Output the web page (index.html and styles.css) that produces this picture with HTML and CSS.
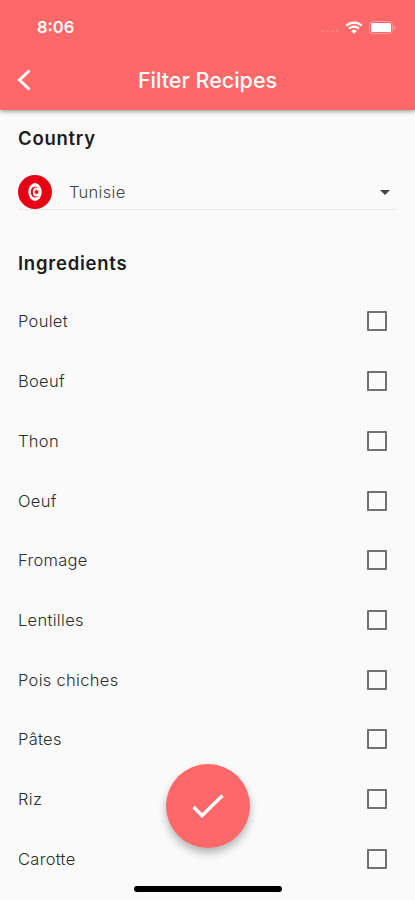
FILE: index.html
```html
<!DOCTYPE html>
<html lang="en">
  <head>
    <meta charset="UTF-8" />
    <meta name="viewport" content="width=device-width, initial-scale=1.0" />
    <title>Filter Recipes</title>
    <link rel="stylesheet" href="styles.css">
  </head>
  <body>
    <header class="header">
      <div class="status-bar">
        <span class="time">8:06</span>
        <div class="status-icons">
          <span class="signal"><i></i><i></i><i></i><i></i></span>
          <svg class="wifi" viewBox="0 0 18 13" width="18" height="13">
            <path d="M1.2 4.7a11.2 11.2 0 0 1 15.6 0M4 7.6a7.2 7.2 0 0 1 10 0" fill="none" stroke="#fff" stroke-width="2.2" />
            <path d="M9 12.8L6.2 10a4 4 0 0 1 5.6 0z" fill="#fff" />
          </svg>
          <svg class="battery" viewBox="0 0 27 13" width="27" height="13">
            <rect x="0.5" y="0.5" width="23" height="12" rx="3" fill="none" stroke="#ffa0a0" />
            <rect x="2" y="2" width="20" height="9" rx="1.5" fill="#fff" />
            <path d="M25 4.5c2 .5 2 3.5 0 4z" fill="#ffa0a0" />
          </svg>
        </div>
      </div>
      <div class="nav">
        <svg class="back" viewBox="0 0 14 22" width="14" height="22">
          <path d="M12.5 1.5L2.5 11l10 9.5" fill="none" stroke="#fff" stroke-width="3" />
        </svg>
        <h1>Filter Recipes</h1>
      </div>
    </header>

    <main class="content">
      <h2>Country</h2>
      <div class="country">
        <svg class="flag" viewBox="0 0 34 34" width="34" height="34">
          <circle cx="17" cy="17" r="17" fill="#e70013" />
          <ellipse cx="17" cy="17" rx="6.7" ry="9" fill="#fff" />
          <ellipse cx="17" cy="17" rx="4.2" ry="5.5" fill="#e70013" />
          <ellipse cx="18.3" cy="17" rx="3.5" ry="4.5" fill="#fff" />
          <path d="M15.5 17l2-.8.2-2.4 1.3 1.9 1.9-.7-1.1 2 1.1 2-1.900-.7-1.300 1.900-.2-2.400z" fill="#e70013" />
        </svg>
        <span class="country-name">Tunisie</span>
        <svg class="arrow" viewBox="0 0 10 5" width="10" height="5">
          <path d="M0 0h10L5 5z" fill="#444" />
        </svg>
      </div>

      <h2>Ingredients</h2>
      <ul class="ingredients">
        <li><span>Poulet</span><i class="checkbox"></i></li>
        <li><span>Boeuf</span><i class="checkbox"></i></li>
        <li><span>Thon</span><i class="checkbox"></i></li>
        <li><span>Oeuf</span><i class="checkbox"></i></li>
        <li><span>Fromage</span><i class="checkbox"></i></li>
        <li><span>Lentilles</span><i class="checkbox"></i></li>
        <li><span>Pois chiches</span><i class="checkbox"></i></li>
        <li><span>Pâtes</span><i class="checkbox"></i></li>
        <li><span>Riz</span><i class="checkbox"></i></li>
        <li><span>Carotte</span><i class="checkbox"></i></li>
      </ul>
    </main>

    <button class="fab" aria-label="Apply">
      <svg viewBox="0 0 32 24" width="32" height="24">
        <path d="M1.5 13l8.5 8.5L30.5 1.5" fill="none" stroke="#fff" stroke-width="3.4" />
      </svg>
    </button>
    <div class="home-indicator"></div>
  </body>
</html>
```
FILE: styles.css
```css
* {
  box-sizing: border-box;
}
body {
  margin: 0;
  height: 900px;
  position: relative;
  overflow: hidden;
  background-color: #fafafa;
  font-family: Inter, sans-serif;
  color: #1c1c1c;
}
.header {
  height: 110px;
  background-color: #ff6868;
  color: white;
  box-shadow: 0 1px 5px rgba(0, 0, 0, 0.45);
}
.status-bar {
  height: 52px;
  padding: 2px 19px 0 37px;
  display: flex;
  justify-content: space-between;
  align-items: center;
}
.time {
  font-size: 16.5px;
  font-weight: 600;
}
.status-icons {
  display: flex;
  align-items: center;
}
.signal {
  display: flex;
  gap: 2px;
  margin: 8px 6px 0 0;
}
.signal i {
  width: 3px;
  height: 2px;
  border-radius: 1px;
  background-color: #ff8080;
}
.wifi {
  margin-right: 6px;
}
.nav {
  height: 56px;
  padding: 0 17px;
  display: grid;
  grid-template-columns: 14px 1fr 14px;
  align-items: center;
}
.nav h1 {
  margin: 0;
  text-align: center;
  font-size: 21.5px;
  font-weight: 500;
}
.content {
  padding: 17px 18px 0;
}
h2 {
  margin: 0;
  font-size: 18.5px;
  line-height: 23px;
  font-weight: 600;
  letter-spacing: 0.75px;
}
.country {
  height: 35px;
  margin: 25px 0 42px;
  border-bottom: 1px solid #e6e6e6;
  display: flex;
  align-items: center;
}
.country-name {
  flex: 1;
  margin-left: 17px;
  font-size: 16.5px;
  font-weight: 300;
  letter-spacing: 0.3px;
  color: #444;
}
.arrow {
  margin-right: 7px;
}
.ingredients {
  margin: 16.6px 0 0;
  padding: 0;
  list-style: none;
}
.ingredients li {
  height: 59.72px;
  padding-right: 10px;
  display: flex;
  justify-content: space-between;
  align-items: center;
  font-size: 16.5px;
  font-weight: 300;
  letter-spacing: 0.3px;
  color: #2c2c2c;
}
.checkbox {
  width: 20px;
  height: 20px;
  border: 2px solid #707070;
  border-radius: 1px;
}
.fab {
  position: absolute;
  left: 166px;
  top: 764px;
  width: 84px;
  height: 84px;
  padding: 0;
  border: none;
  border-radius: 50%;
  background-color: #ff6868;
  box-shadow: 0 5px 9px rgba(0, 0, 0, 0.28);
  display: flex;
  justify-content: center;
  align-items: center;
}
.home-indicator {
  position: absolute;
  left: 134px;
  top: 886px;
  width: 148px;
  height: 6px;
  border-radius: 3px;
  background-color: black;
}
```
